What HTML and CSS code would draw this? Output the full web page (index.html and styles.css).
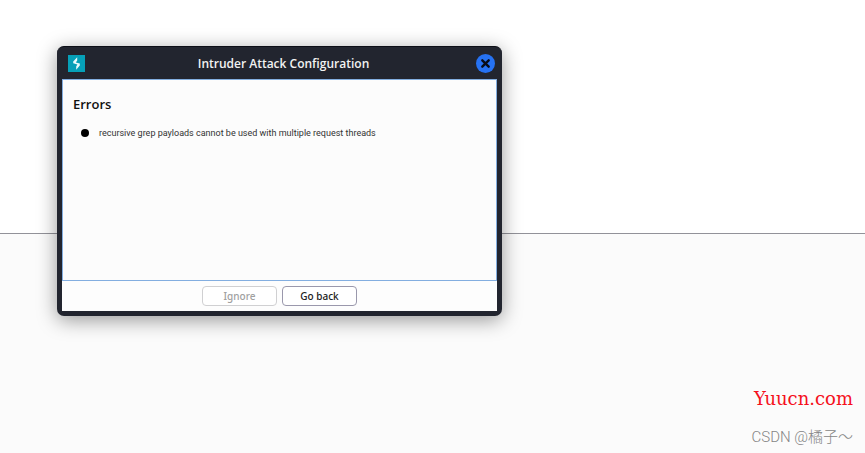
FILE: index.html
```html
<!DOCTYPE html>
<html lang="en">
<head>
<meta charset="utf-8">
<title>Intruder Attack Configuration</title>
<link rel="stylesheet" href="styles.css">
</head>
<body>
<main class="workspace">
  <div class="pane pane-top"></div>
  <div class="pane pane-bottom">
    <p class="site">Yuucn.com</p>
    <p class="credit">CSDN @橘子～</p>
  </div>
</main>
<section class="dialog" role="dialog" aria-labelledby="dialog-title">
  <header class="titlebar">
    <svg class="logo" viewBox="0 0 17 17" aria-hidden="true">
      <rect width="17" height="17" fill="#06a0b8"/>
      <path d="M9.2 2.2V5.4L7.8 7.4 11.8 8.4V10.4L8.2 14.8V11.4L9.4 9.4 5.2 8.2V6.4Z" fill="#e9fbfc"/>
    </svg>
    <h1 class="title" id="dialog-title">Intruder Attack Configuration</h1>
    <button class="close" type="button" aria-label="Close">
      <svg viewBox="0 0 19 19" aria-hidden="true">
        <circle cx="9.5" cy="9.5" r="9.5" fill="#2672f3"/>
        <path d="M6.3 6.3 12.7 12.7M12.7 6.3 6.3 12.7" stroke="#080c18" stroke-width="2.4" stroke-linecap="round"/>
      </svg>
    </button>
  </header>
  <div class="content">
    <h2 class="heading">Errors</h2>
    <ul class="errors">
      <li>recursive grep payloads cannot be used with multiple request threads</li>
    </ul>
  </div>
  <footer class="actions">
    <button class="button" type="button" disabled>Ignore</button>
    <button class="button" type="button">Go back</button>
  </footer>
</section>
</body>
</html>
```
FILE: styles.css
```css
* {
  box-sizing: border-box;
}

body {
  margin: 0;
  background: #fff;
  font-family: "Open Sans", "Noto Sans", sans-serif;
}

.workspace {
  display: grid;
  grid-template-rows: 233px 1fr;
  min-height: 100vh;
}

.pane-bottom {
  display: flex;
  flex-direction: column;
  justify-content: flex-end;
  align-items: flex-end;
  gap: 16px;
  padding: 0 12px 5px;
  border-top: 1px solid #929299;
  background: #fbfbfb;
}

.site,
.credit {
  margin: 0;
}

.site {
  color: #f5101c;
  font: 18px/22px "DejaVu Serif", serif;
}

.credit {
  color: #858585;
  font: 300 15px/22px Roboto, "Noto Sans CJK SC", sans-serif;
}

.dialog {
  position: absolute;
  top: 46px;
  left: 57px;
  display: flex;
  flex-direction: column;
  width: 445px;
  padding: 0 5px 5px;
  border-top: 1px solid #0d0f17;
  border-radius: 7px;
  background: #22252f;
  box-shadow: 0 4px 20px rgba(0, 0, 0, 0.4);
}

.titlebar {
  display: flex;
  align-items: center;
  height: 32px;
  padding: 0 2px 0 6px;
}

.logo {
  width: 17px;
  height: 17px;
}

.title {
  flex: 1;
  margin: 0;
  padding-left: 6px;
  color: #f2f2f2;
  font-size: 12px;
  font-weight: 600;
  text-align: center;
}

.close {
  width: 19px;
  height: 19px;
  padding: 0;
  border: 0;
  border-radius: 50%;
  background: none;
}

.close svg {
  display: block;
}

.content {
  min-height: 202px;
  padding: 14px 10px;
  border: 1px solid #83aee0;
  background: #fcfcfc;
}

.heading {
  margin: 0;
  color: #111;
  font-size: 13px;
  font-weight: 600;
  line-height: 20px;
}

.errors {
  margin: 12px 0 0;
  padding: 0;
  list-style: none;
}

.errors li {
  display: flex;
  align-items: center;
  gap: 10px;
  padding-left: 8px;
  color: #333;
  font: 9px/14px Roboto, sans-serif;
}

.errors li::before {
  width: 8px;
  height: 8px;
  border-radius: 50%;
  background: #000;
  content: "";
}

.actions {
  display: flex;
  justify-content: center;
  gap: 5px;
  padding: 5px 0;
  background: #fdfdfd;
}

.button {
  width: 75px;
  height: 20px;
  padding: 0;
  border: 1px solid #9a98ac;
  border-radius: 4px;
  background: #fff;
  color: #222;
  font: 500 10px/16px "Noto Sans", sans-serif;
}

.button:disabled {
  border-color: #d0d0d2;
  color: #a0a0a0;
}
```
